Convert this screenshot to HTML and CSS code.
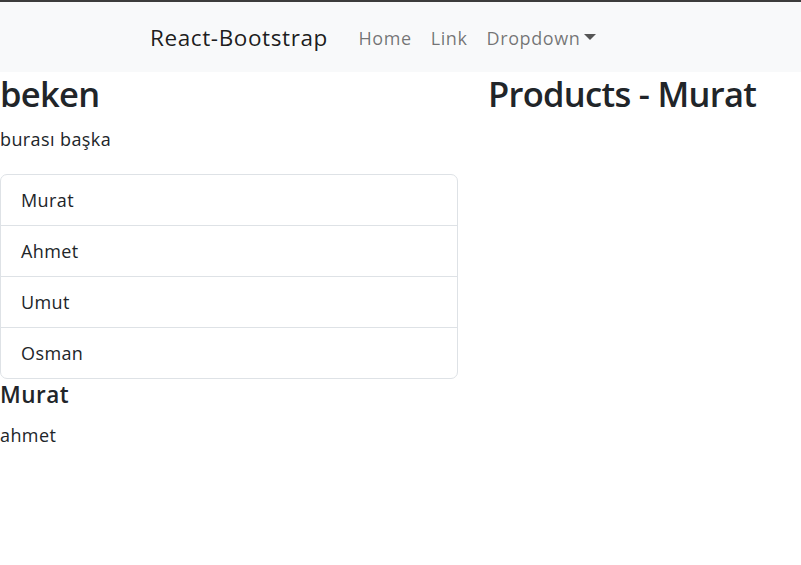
FILE: index.html
```html
<!DOCTYPE html>
<html lang="tr">
<head>
<meta charset="utf-8">
<title>React-Bootstrap</title>
<link rel="stylesheet" href="styles.css">
</head>
<body>
<div class="topline"></div>
<nav class="navbar">
  <a class="brand" href="#">React-Bootstrap</a>
  <ul class="nav">
    <li><a class="nav-link" href="#">Home</a></li>
    <li><a class="nav-link" href="#">Link</a></li>
    <li><a class="nav-link dropdown" href="#">Dropdown<span class="caret"></span></a></li>
  </ul>
</nav>
<main class="row">
  <section class="col-left">
    <h1 class="title">beken</h1>
    <p class="lead-text">burası başka</p>
    <ul class="list-group">
      <li class="list-item">Murat</li>
      <li class="list-item">Ahmet</li>
      <li class="list-item">Umut</li>
      <li class="list-item">Osman</li>
    </ul>
    <h5 class="subtitle">Murat</h5>
    <p class="detail">ahmet</p>
  </section>
  <section class="col-right">
    <h1 class="title">Products - Murat</h1>
  </section>
</main>
</body>
</html>
```

FILE: styles.css
```css
* { box-sizing: border-box; }

html, body {
  margin: 0;
  padding: 0;
  background: #fff;
}

body {
  font-family: "Open Sans", "Noto Sans", sans-serif;
  font-size: 18px;
  line-height: 27px;
  letter-spacing: 0.4px;
  color: #212529;
}

.topline {
  height: 2px;
  background: #3c3c3c;
}

.navbar {
  height: 70px;
  background: #f8f9fa;
  display: flex;
  align-items: center;
  padding-left: 150px;
  padding-top: 2px;
}

.brand {
  font-size: 22.5px;
  line-height: 34px;
  letter-spacing: 0.6px;
  color: rgba(0, 0, 0, 0.9);
  text-decoration: none;
  margin-right: 21px;
}

.nav {
  list-style: none;
  margin: 0;
  padding: 0;
  display: flex;
}

.nav-link {
  display: block;
  padding: 0 9.5px;
  color: rgba(0, 0, 0, 0.55);
  text-decoration: none;
  font-size: 18px;
  line-height: 27px;
  letter-spacing: 0.6px;
}

.caret {
  display: inline-block;
  margin-left: 4px;
  vertical-align: 4.6px;
  border-top: 6px solid #555;
  border-left: 6px solid transparent;
  border-right: 6px solid transparent;
  border-bottom: 0;
}

.row {
  display: flex;
  gap: 30px;
}

.col-left {
  width: 458px;
  flex: none;
}

.col-right {
  flex: 1;
}

.title {
  margin: 0 0 11px;
  font-size: 34.5px;
  line-height: 43px;
  letter-spacing: -0.7px;
  font-weight: 600;
}

.lead-text {
  margin: 0 0 21px;
}

.list-group {
  list-style: none;
  margin: 0;
  padding: 0;
  border: 1px solid #dee2e6;
  border-radius: 7px;
}

.list-item {
  padding: 11.5px 20px;
  line-height: 27px;
}

.list-item + .list-item {
  border-top: 1px solid #dee2e6;
}

.subtitle {
  margin: 2px 0 14px;
  font-size: 22.5px;
  line-height: 27px;
  letter-spacing: 0.5px;
  font-weight: 600;
}

.detail {
  margin: 0;
}
```
